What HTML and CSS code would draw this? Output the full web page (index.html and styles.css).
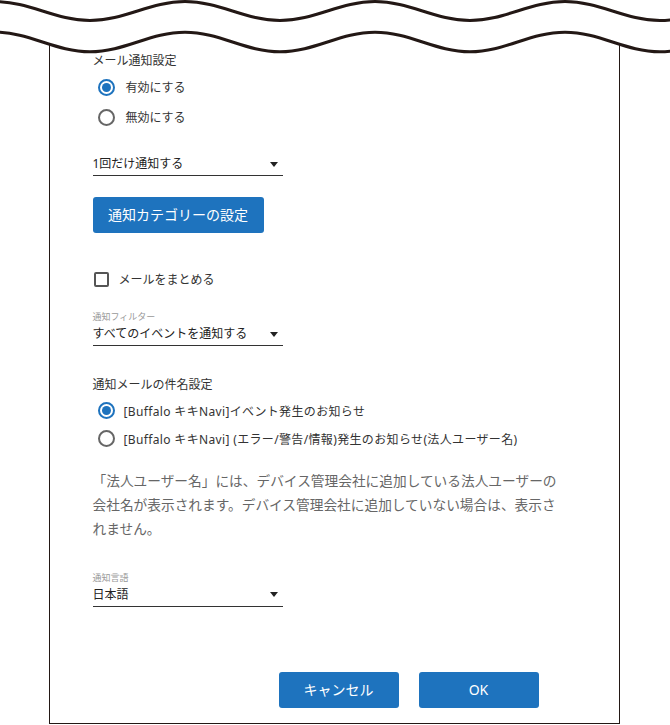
FILE: index.html
```html
<!DOCTYPE html>
<html lang="ja">
<head>
    <meta charset="utf-8" />
    <title>メール通知設定</title>
    <link rel="stylesheet" href="styles.css">
</head>
<body>
    <svg class="tear" width="670" height="60" viewBox="0 0 670 60">
        <path d="M -5 32.2 C 29.6 32.2 55.4 51.8 90 51.8 S 150.4 32.2 185 32.2 S 245.4 51.8 280 51.8 S 340.4 32.2 375 32.2 S 435.4 51.8 470 51.8 S 530.4 32.2 565 32.2 S 625.4 51.8 660 51.8 S 720.4 32.2 755 32.2 L 755 -5 L -5 -5 Z" fill="#fff" />
        <path d="M -5 1.5 C 29.6 1.5 55.4 20.5 90 20.5 S 150.4 1.5 185 1.5 S 245.4 20.5 280 20.5 S 340.4 1.5 375 1.5 S 435.4 20.5 470 20.5 S 530.4 1.5 565 1.5 S 625.4 20.5 660 20.5 S 720.4 1.5 755 1.5" fill="none" stroke="#231815" stroke-width="3" />
        <path d="M -5 32.2 C 29.6 32.2 55.4 51.8 90 51.8 S 150.4 32.2 185 32.2 S 245.4 51.8 280 51.8 S 340.4 32.2 375 32.2 S 435.4 51.8 470 51.8 S 530.4 32.2 565 32.2 S 625.4 51.8 660 51.8 S 720.4 32.2 755 32.2" fill="none" stroke="#231815" stroke-width="3" />
    </svg>

    <div class="dialog">
        <p class="group-title">メール通知設定</p>
        <ul class="radios">
            <li class="radio-row"><span class="radio on"></span>有効にする</li>
            <li class="radio-row"><span class="radio"></span>無効にする</li>
        </ul>

        <div class="select first"><span>1回だけ通知する</span><span class="caret"></span></div>

        <button class="btn category">通知カテゴリーの設定</button>

        <label class="check-row"><span class="check"></span>メールをまとめる</label>

        <div class="field filter">
            <span class="field-label">通知フィルター</span>
            <div class="select"><span>すべてのイベントを通知する</span><span class="caret"></span></div>
        </div>

        <p class="group-title subject">通知メールの件名設定</p>
        <ul class="radios tight">
            <li class="radio-row"><span class="radio on"></span>[Buffalo キキNavi]イベント発生のお知らせ</li>
            <li class="radio-row"><span class="radio"></span>[Buffalo キキNavi] (エラー/警告/情報)発生のお知らせ(法人ユーザー名)</li>
        </ul>

        <p class="note">「法人ユーザー名」には、デバイス管理会社に追加している法人ユーザーの<br>会社名が表示されます。デバイス管理会社に追加していない場合は、表示されません。</p>

        <div class="field lang">
            <span class="field-label">通知言語</span>
            <div class="select"><span>日本語</span><span class="caret"></span></div>
        </div>

        <div class="actions">
            <button class="btn">キャンセル</button>
            <button class="btn">OK</button>
        </div>
    </div>
</body>
</html>
```

FILE: styles.css
```css
body,
div,
p,
ul,
li {
    margin: 0;
    padding: 0
}

body {
    background: #fff;
    font-family: "Noto Sans", "Noto Sans CJK JP", sans-serif;
    color: #333
}

.tear {
    position: absolute;
    left: 0;
    top: 0;
    display: block
}

.dialog {
    width: 571px;
    box-sizing: border-box;
    margin-left: 49px;
    border: 1.5px solid #231815;
    border-top: none;
    padding: 51px 40px 15px 42.5px;
    display: flex;
    flex-direction: column;
    align-items: flex-start
}

.group-title {
    font-size: 12px;
    line-height: 20px;
    color: #333
}
.group-title.subject { margin-top: 29px }

.radios { list-style: none; margin-top: 1px }
.radios.tight { margin-top: 1.5px }

.radio-row {
    display: flex;
    align-items: center;
    gap: 11px;
    height: 30px;
    padding-left: 5px;
    font-size: 12px;
    color: #333
}
.radios.tight .radio-row { height: 28px; gap: 9px; letter-spacing: 0.35px }

.radio {
    width: 17px;
    height: 17px;
    box-sizing: border-box;
    border: 2px solid #666;
    border-radius: 50%;
    position: relative;
    flex: none
}
.radio.on { border-color: #1e73be }
.radio.on::after {
    content: "";
    position: absolute;
    left: 2px;
    top: 2px;
    width: 9px;
    height: 9px;
    border-radius: 50%;
    background: #1e73be
}

.select {
    width: 190px;
    display: flex;
    justify-content: space-between;
    align-items: center;
    line-height: 20px;
    padding-bottom: 1px;
    border-bottom: 1px solid #333;
    font-size: 12px;
    color: #222
}
.select.first { margin-top: 22px }

.caret {
    width: 0;
    height: 0;
    border-left: 4px solid transparent;
    border-right: 4px solid transparent;
    border-top: 5px solid #222;
    margin-right: 5px
}

.btn {
    height: 36px;
    border: none;
    border-radius: 3px;
    background: #1e73be;
    color: #fff;
    font-family: inherit;
    font-size: 14px;
    line-height: 36px;
    padding: 0 15.5px;
    cursor: pointer
}
.btn.category { margin-top: 21px }

.check-row {
    margin-top: 36px;
    height: 20px;
    display: flex;
    align-items: center;
    gap: 10px;
    font-size: 12px;
    color: #333
}
.check {
    width: 15px;
    height: 15px;
    box-sizing: border-box;
    border: 2px solid #555;
    border-radius: 2px;
    margin-left: 1px
}

.field-label {
    display: block;
    font-size: 9px;
    line-height: 15px;
    color: #999
}
.field.filter { margin-top: 20px }
.field.lang { margin-top: 29px }

.note {
    margin-top: 16px;
    width: 476px;
    font-size: 13.7px;
    line-height: 24px;
    color: #666
}

.actions {
    align-self: stretch;
    margin-top: 65px;
    display: flex;
    justify-content: flex-end;
    gap: 20px;
    margin-right: 40.5px
}
.actions .btn { width: 120px; padding: 0 }
```
